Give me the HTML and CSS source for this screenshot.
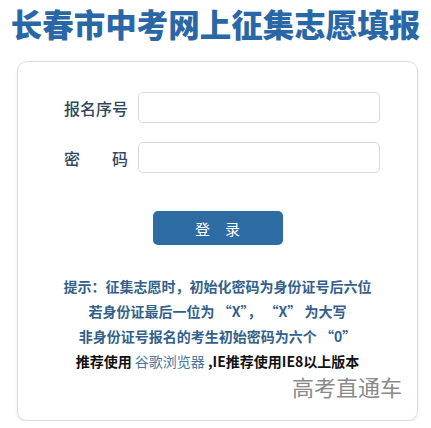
FILE: index.html
```html
<!DOCTYPE html>
<html lang="zh-CN">
<head>
    <meta charset="UTF-8">
    <meta name="viewport" content="width=device-width, initial-scale=1.0">
    <title>长春市中考网上征集志愿填报</title>
    <link rel="stylesheet" href="styles.css">
</head>
<body>
    <h1 class="title">长春市中考网上征集志愿填报</h1>
    <div class="card">
        <form class="login-form" onsubmit="return false;">
            <div class="row">
                <label for="bmxh">报名序号</label>
                <input type="text" id="bmxh" name="bmxh">
            </div>
            <div class="row">
                <label for="mima">密&emsp;&emsp;码</label>
                <input type="password" id="mima" name="mima">
            </div>
            <div class="btn-wrap">
                <button type="submit" class="login-btn">登&emsp;录</button>
            </div>
        </form>
        <div class="tips">
            <p>提示：征集志愿时，初始化密码为身份证号后六位</p>
            <p>若身份证最后一位为 “X”， “X” 为大写</p>
            <p>非身份证号报名的考生初始密码为六个 “0”</p>
            <p class="browser">推荐使用 <a href="#">谷歌浏览器</a> ,IE推荐使用IE8以上版本</p>
        </div>
        <div class="mark">高考直通车</div>
    </div>
</body>
</html>
```

FILE: styles.css
```css
body {
    margin: 0;
    padding: 0;
    background-color: #fff;
    font-family: "Noto Sans CJK SC", "Liberation Sans", sans-serif;
}
.title {
    margin: 0;
    padding-top: 3px;
    height: 58px;
    text-align: center;
    font-size: 31.5px;
    line-height: 40px;
    font-weight: 900;
    color: #2a67a6;
    white-space: nowrap;
}
.card {
    margin: 0 13px 0 17px;
    height: 358px;
    border: 1px solid #dcdcdc;
    border-radius: 10px;
    box-shadow: 0 2px 3px rgba(0, 0, 0, 0.08);
}
.login-form {
    padding: 30px 0 0 46px;
}
.row {
    display: flex;
    align-items: center;
    margin-bottom: 19px;
}
.row label {
    width: 64px;
    margin-right: 10px;
    font-size: 16px;
    font-weight: 500;
    color: #2f4760;
    white-space: nowrap;
}
.row input {
    box-sizing: border-box;
    width: 242px;
    height: 31px;
    border: 1px solid #d9d9d9;
    border-radius: 5px;
    padding: 0 8px;
    outline: none;
}
.btn-wrap {
    text-align: center;
    padding-top: 19px;
    margin-left: -46px;
}
.login-btn {
    width: 130px;
    height: 34px;
    border: none;
    border-radius: 5px;
    background-color: #2d6ba3;
    color: #fff;
    font-family: "Noto Sans CJK SC", sans-serif;
    font-size: 15px;
    cursor: pointer;
}
.tips {
    margin-top: 29px;
    text-align: center;
}
.tips p {
    margin: 0;
    font-size: 14px;
    line-height: 25px;
    font-weight: bold;
    color: #335f8a;
}
.tips .browser {
    color: #111;
}
.tips .browser a {
    font-weight: normal;
    color: #4577a0;
    text-decoration: none;
}
.mark {
    text-align: right;
    padding-right: 15px;
    font-size: 22px;
    line-height: 24px;
    color: #8a8a8a;
}
```
